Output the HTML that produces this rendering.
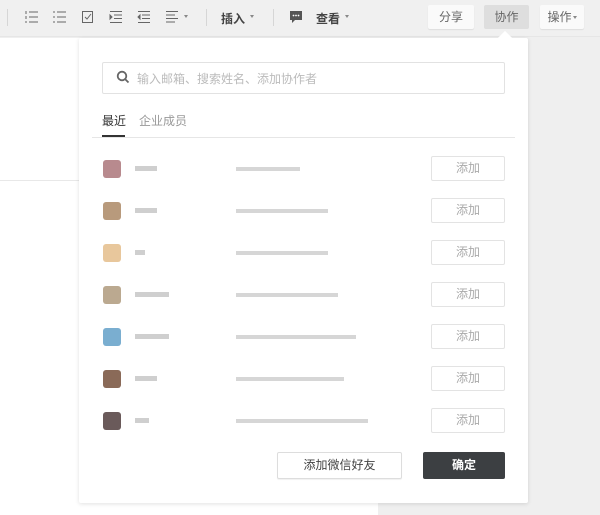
<!DOCTYPE html>
<html><head><meta charset="utf-8"><style>
*{margin:0;padding:0;box-sizing:border-box}
body{width:600px;height:515px;overflow:hidden;background:#efefef;font-family:"Liberation Sans","Noto Sans CJK SC",sans-serif;position:relative}
.tb{position:absolute;left:0;top:0;width:600px;height:37px;background:#f0f0f0;border-bottom:1px solid #e6e6e6}
.a{position:absolute}
.div{position:absolute;top:9px;width:1px;height:17px;background:#d6d6d6}
.t{position:absolute;top:10px;font-size:12px;color:#444;font-weight:bold}
.car{position:absolute;top:15px;width:0;height:0;border-left:2px solid transparent;border-right:2px solid transparent;border-top:3px solid #888}
.btn{position:absolute;top:5px;height:24px;border-radius:2px;font-size:12px;color:#666;text-align:center;line-height:24px;background:#fafafa;box-shadow:0 1px 1px rgba(0,0,0,.08)}
.left{position:absolute;left:0;top:38px;width:378px;height:477px;background:#fff}
.pop{position:absolute;left:79px;top:38px;width:449px;height:465px;background:#fff;box-shadow:0 1px 4px rgba(0,0,0,.12);border-radius:2px}
.row{position:absolute;left:0;width:449px;height:42px}
.av{position:absolute;left:24px;top:-8px;width:18px;height:18px;border-radius:3px}
.nm{position:absolute;left:56px;top:-2px;height:5px;background:#bbb;opacity:.7}
.em{position:absolute;left:157px;top:-1px;height:4px;background:#ccc;opacity:.8}
.add{position:absolute;left:352px;top:-12px;width:74px;height:25px;border:1px solid #e3e3e3;border-radius:2px;font-size:12px;color:#aaa;text-align:center;line-height:23px}
</style></head><body>
<div class="tb">
<div class="div" style="left:7px"></div>
<svg class="a" style="left:24px;top:10px" width="16" height="14" viewBox="0 0 16 14" stroke="#666" fill="none"><path d="M2 1v3M2 6v3M2 11v2M5 2h9M5 7h9M5 12h9"/></svg>
<svg class="a" style="left:52px;top:10px" width="16" height="14" viewBox="0 0 16 14" stroke="#666" fill="none"><path d="M1 2h2M1 7h2M1 12h2M5 2h9M5 7h9M5 12h9"/></svg>
<svg class="a" style="left:81px;top:10px" width="14" height="14" viewBox="0 0 14 14" stroke="#666" fill="none"><path d="M1.5 1.5h10v11h-10z"/><path d="M4 7l2 2 4-5"/></svg>
<svg class="a" style="left:109px;top:10px" width="14" height="14" viewBox="0 0 14 14" stroke="#666" fill="none"><path d="M1 1.5h12M5 5h8M5 8.5h8M1 12.5h12"/><path d="M1 5l2 2-2 2z" fill="#666"/></svg>
<svg class="a" style="left:137px;top:10px" width="14" height="14" viewBox="0 0 14 14" stroke="#666" fill="none"><path d="M1 1.5h12M5 5h8M5 8.5h8M1 12.5h12"/><path d="M3 5l-2 2 2 2z" fill="#666"/></svg>
<svg class="a" style="left:165px;top:10px" width="14" height="14" viewBox="0 0 14 14" stroke="#666" fill="none"><path d="M1 1.5h12M1 5h9M1 8.5h12M1 12h9"/></svg>
<div class="car" style="left:184px"></div>
<div class="div" style="left:206px"></div>
<div class="t" style="left:221px">插入</div><div class="car" style="left:250px"></div>
<div class="div" style="left:273px"></div>
<svg class="a" style="left:289px;top:10px" width="14" height="15" viewBox="0 0 14 15"><path d="M1 1h12v9H6l-3 3v-3H1z" fill="#555"/><circle cx="4.5" cy="5.5" r=".9" fill="#fff"/><circle cx="7" cy="5.5" r=".9" fill="#fff"/><circle cx="9.5" cy="5.5" r=".9" fill="#fff"/></svg>
<div class="t" style="left:316px">查看</div><div class="car" style="left:345px"></div>
<div class="btn" style="left:428px;width:46px">分享</div>
<div class="btn" style="left:484px;width:45px;background:#dedede;box-shadow:none">协作</div>
<div class="btn" style="left:540px;width:44px">操作<span style="display:inline-block;border-left:2px solid transparent;border-right:2px solid transparent;border-top:3px solid #888;vertical-align:middle;margin-left:1px"></span></div>
</div>
<div class="left"></div>
<div class="a" style="left:0;top:180px;width:80px;height:1px;background:#e8e8e8"></div>
<div class="pop">
<div class="a" style="left:421px;top:-5px;width:10px;height:10px;background:#fff;transform:rotate(45deg)"></div>
<div class="a" style="left:23px;top:24px;width:403px;height:32px;border:1px solid #e2e2e2;border-radius:2px"></div>
<svg class="a" style="left:37px;top:32px" width="14" height="14" viewBox="0 0 14 14" fill="none" stroke="#666" stroke-width="1.8"><circle cx="6" cy="6" r="4.3"/><path d="M9 9l3.5 3.5"/></svg>
<div class="a" style="left:58px;top:32px;font-size:12px;color:#bbb">输入邮箱、搜索姓名、添加协作者</div>
<div class="a" style="left:23px;top:74px;font-size:12px;color:#333">最近</div>
<div class="a" style="left:60px;top:74px;font-size:12px;color:#999">企业成员</div>
<div class="a" style="left:13px;top:99px;width:423px;height:1px;background:#e6e6e6"></div>
<div class="a" style="left:23px;top:97px;width:23px;height:2px;background:#333"></div>
<div class="row" style="top:130px"><div class="av" style="background:#b88a8e"></div><div class="nm" style="width:22px"></div><div class="em" style="width:64px"></div><div class="add">添加</div></div>
<div class="row" style="top:172px"><div class="av" style="background:#b89a7c"></div><div class="nm" style="width:22px"></div><div class="em" style="width:92px"></div><div class="add">添加</div></div>
<div class="row" style="top:214px"><div class="av" style="background:#e8c79c"></div><div class="nm" style="width:10px"></div><div class="em" style="width:92px"></div><div class="add">添加</div></div>
<div class="row" style="top:256px"><div class="av" style="background:#bba990"></div><div class="nm" style="width:34px"></div><div class="em" style="width:102px"></div><div class="add">添加</div></div>
<div class="row" style="top:298px"><div class="av" style="background:#7aaed0"></div><div class="nm" style="width:34px"></div><div class="em" style="width:120px"></div><div class="add">添加</div></div>
<div class="row" style="top:340px"><div class="av" style="background:#8a6a58"></div><div class="nm" style="width:22px"></div><div class="em" style="width:108px"></div><div class="add">添加</div></div>
<div class="row" style="top:382px"><div class="av" style="background:#6a5a5a"></div><div class="nm" style="width:14px"></div><div class="em" style="width:132px"></div><div class="add">添加</div></div>
<div class="a" style="left:198px;top:414px;width:125px;height:27px;border:1px solid #ddd;border-radius:2px;font-size:12px;color:#444;text-align:center;line-height:25px;box-shadow:0 1px 1px rgba(0,0,0,.06)">添加微信好友</div>
<div class="a" style="left:344px;top:414px;width:82px;height:27px;background:#3c3f42;border-radius:2px;font-size:12px;color:#fff;font-weight:bold;text-align:center;line-height:27px">确定</div>
</div>
</body></html>
